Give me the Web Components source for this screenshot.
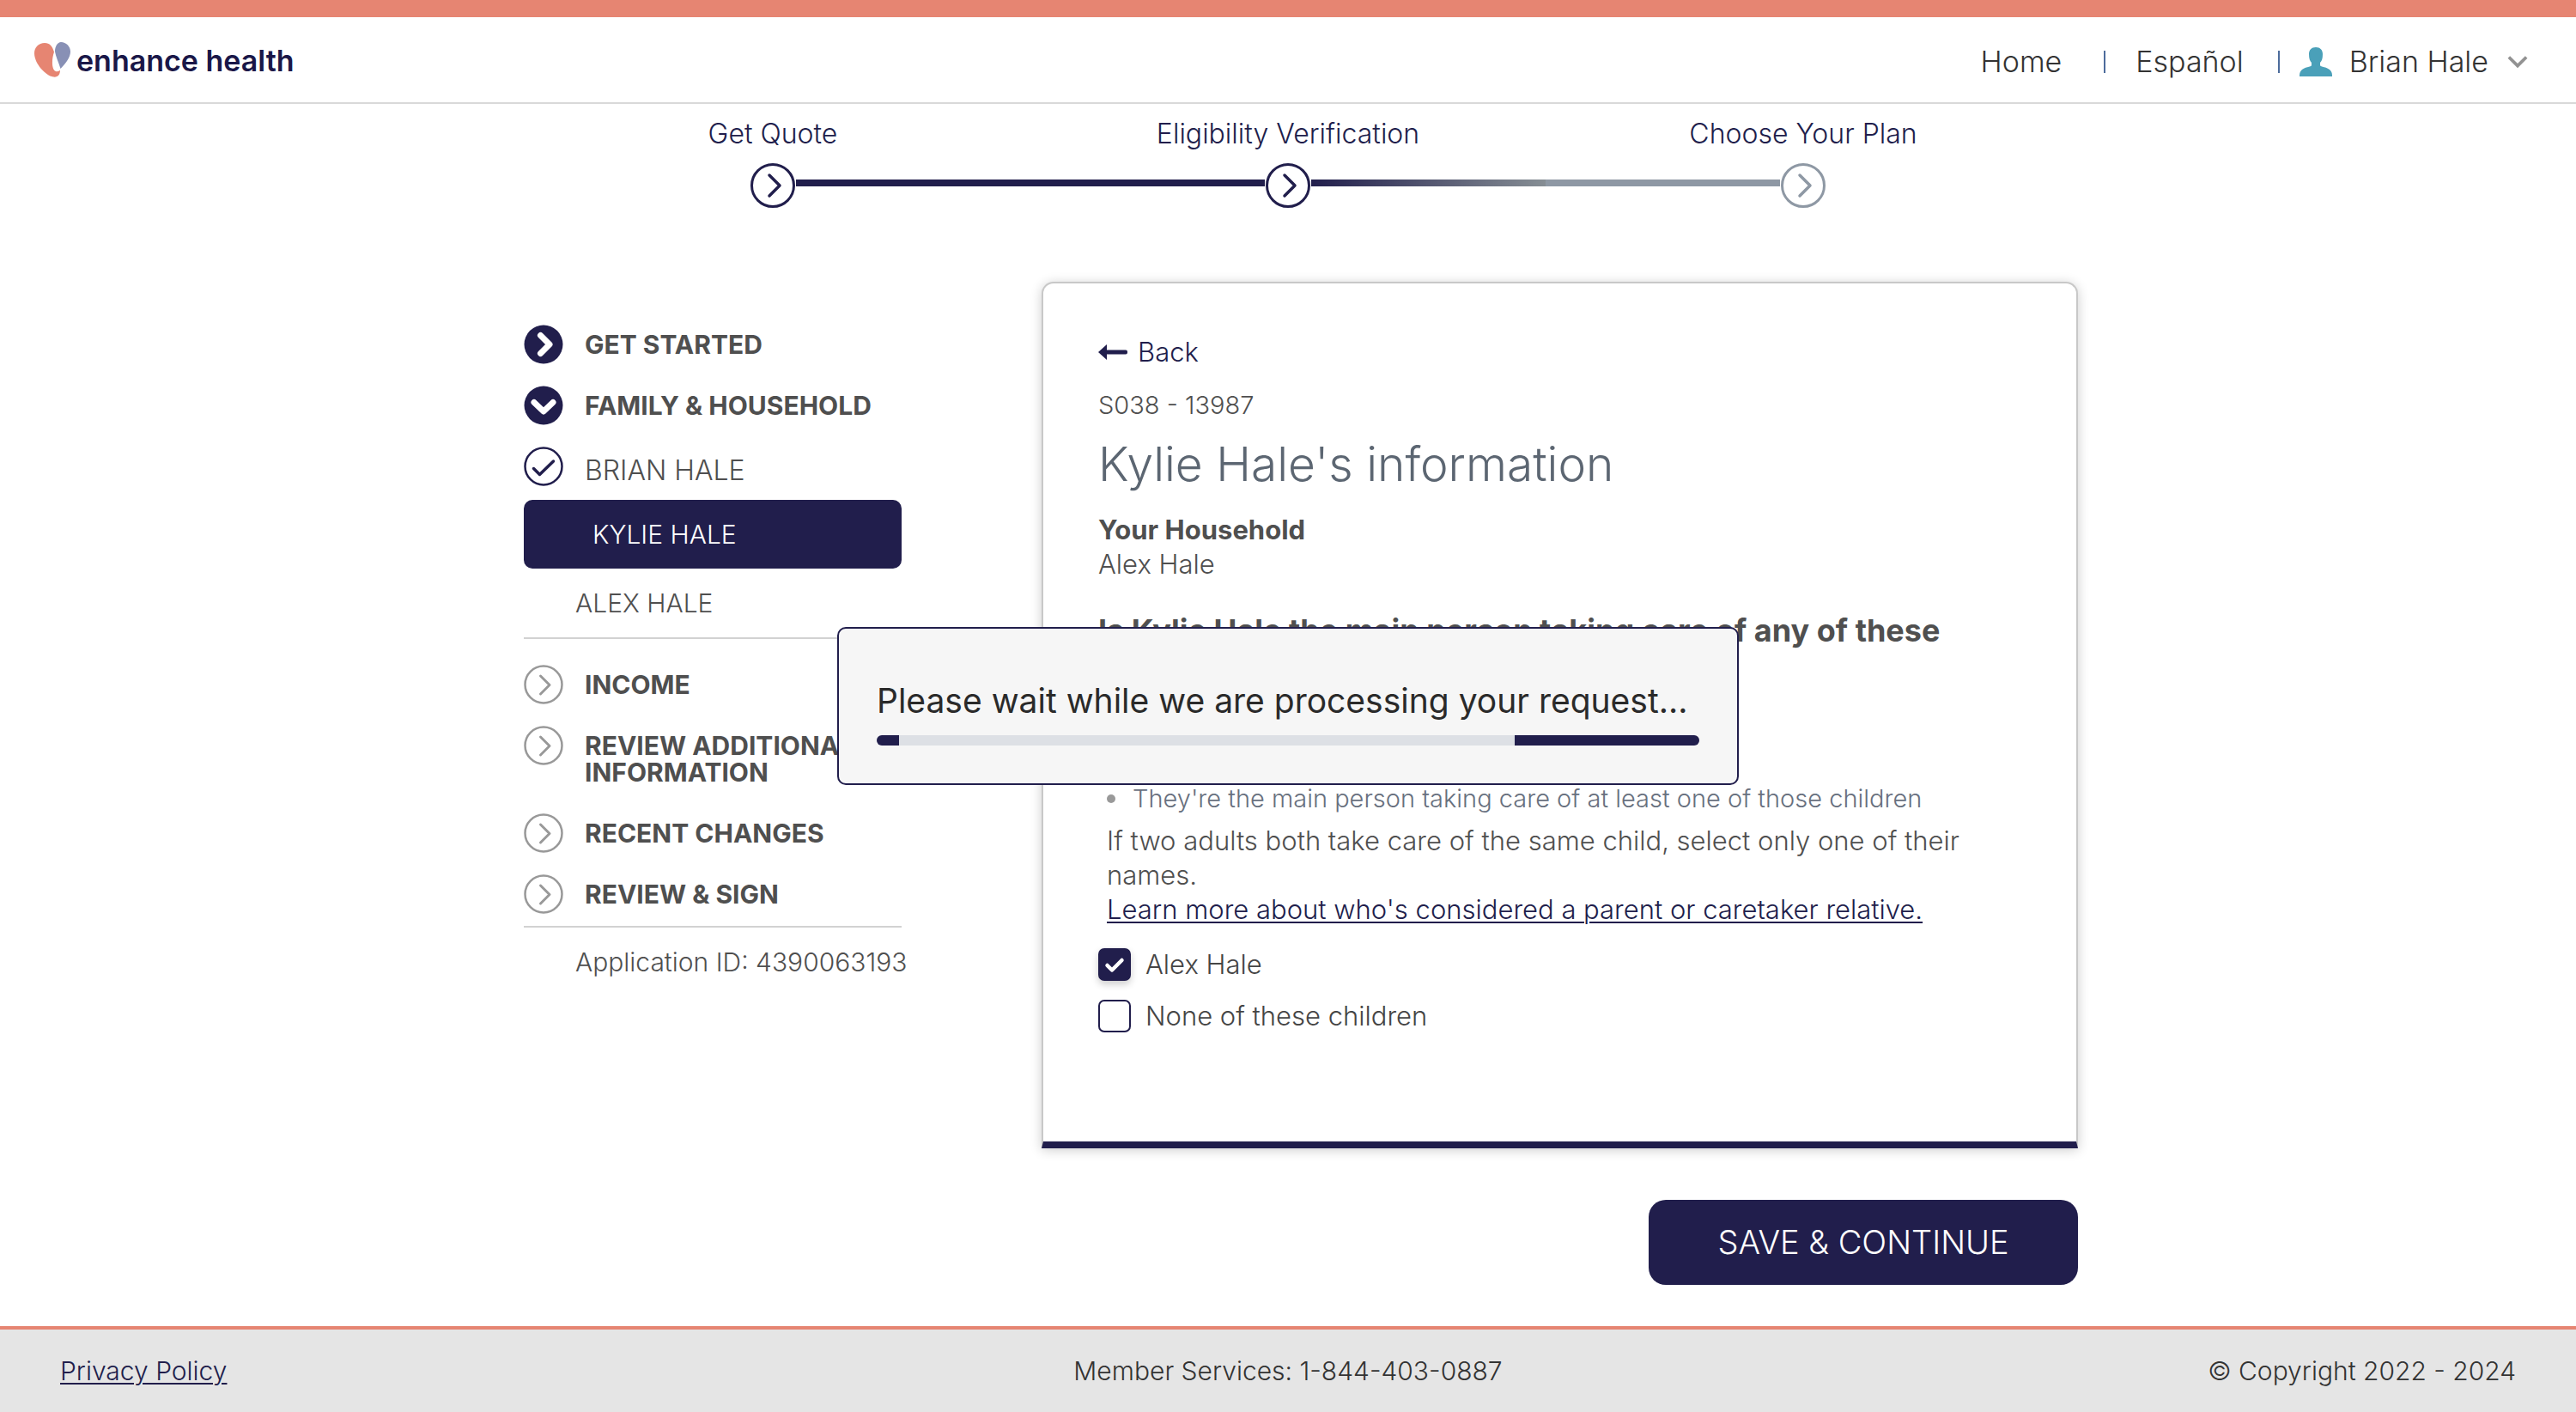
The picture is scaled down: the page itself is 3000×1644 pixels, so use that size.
<!DOCTYPE html>
<html lang="en">
<head>
<meta charset="utf-8">
<title>Enhance Health - Eligibility Verification</title>
<style>
:root{--navy:#211e4c;--coral:#e68572;--ink:#4f4f4f;--rule:#d2d2d2}
html,body{margin:0}
body{font:300 30px/40px Inter,"Open Sans",sans-serif;color:var(--ink);background:#fff}
</style>
</head>
<body>
<eh-app></eh-app>
<script>
const define = (name, html) => {
  const template = document.createElement('template');
  template.innerHTML = '<style>*{box-sizing:border-box}:host([hidden]){display:none}</style>' + html;
  customElements.define(name, class extends HTMLElement {
    connectedCallback() {
      if (this.shadowRoot) return;
      this.attachShadow({mode: 'open'}).append(template.content.cloneNode(true));
    }
  });
};

/* Brand mark and wordmark */
define('eh-logo', `
<style>
:host{display:block}
a{display:flex;align-items:center;gap:6px;color:#1a1748;text-decoration:none;font-size:34px;font-weight:600}
svg{width:43px;height:41px}
span{padding-top:2px}
</style>
<a href="#"><svg viewBox="0 0 43 41" aria-hidden="true">
<path fill="#e68572" d="M12 1C5 1 0 6 0 13c0 12 13 26 22 27.500 5 .8 8-2 8-8-1 1.500-3 2-5 1.500-5-1.500-5-14-2-22.500C21 5 18 1 12 1Z"/>
<path fill="#8890b5" d="M31 0c-4 0-7 5-7 11 1 6 4 12 6.500 20C37 24 42 18 42 11 42 5 37 0 31 0Z"/>
</svg><span>enhance health</span></a>`);

/* Top bar */
define('eh-header', `
<style>
:host{display:block}
header{display:flex;align-items:center;justify-content:space-between;height:121px;padding:0 56px 0 40px;border-top:20px solid var(--coral);border-bottom:2px solid #d9d9d9}
nav{display:flex;align-items:center;padding-top:4px;color:#333;font-size:34px}
a{color:inherit;text-decoration:none}
i{width:2px;height:26px;background:#4d6c9c}
.home{margin-right:49px}.lang{margin:0 40px 0 35px}
button{display:flex;align-items:center;font:inherit;color:inherit;background:none;border:0;padding:0;margin-left:23px}
.person{width:38px;height:34px;margin-right:20px}
.chev{width:24px;height:16px;margin-left:22px}
</style>
<header><eh-logo></eh-logo>
<nav><a class="home" href="#">Home</a><i></i><a class="lang" href="#">Español</a><i></i>
<button type="button"><svg class="person" viewBox="0 0 38 34" aria-hidden="true"><path fill="#4aa0b9" d="M19 0c5 0 8 3 8 8 0 5-1 8-3 10v3c0 2 9 2 12 6 2 2 2 5 2 7H0c0-2 0-5 2-7 3-4 12-4 12-6v-3c-2-2-3-5-3-10 0-5 3-8 8-8Z"/></svg><span>Brian Hale</span>
<svg class="chev" viewBox="0 0 26 16" fill="none" stroke="#929292" stroke-width="4" aria-hidden="true"><path d="M2 2l11 11L24 2"/></svg></button></nav></header>`);

/* One stage of the progress track; the "before" and "after" attributes colour its half-lines */
define('eh-step', `
<style>
:host{display:flex;flex-direction:column;align-items:center;gap:14px;flex:1;color:var(--navy);font-size:32px;--mark:var(--navy)}
:host([upcoming]){--mark:#8e98a4}
.track{display:flex;align-items:center;align-self:stretch;gap:1px}
.track i{flex:1;height:8px;margin-bottom:6px}
svg{width:52px;height:52px;fill:none;stroke:var(--mark)}
:host([before=done]) .l,:host([after=done]) .r{background:var(--navy)}
:host([before=todo]) .l{background:#8e98a4}
:host([after=current]) .r{background:linear-gradient(90deg,var(--navy),#868e94)}
</style>
<span><slot></slot></span>
<div class="track"><i class="l"></i><svg viewBox="0 0 52 52" aria-hidden="true"><circle cx="26" cy="26" r="24.500" stroke-width="3"/><path d="M22 14l12 12-12 12" stroke-width="3.500" stroke-linecap="round" stroke-linejoin="round"/></svg><i class="r"></i></div>`);

define('eh-stepper', `
<style>:host{display:flex;padding:15px 20% 0}</style>
<eh-step after="done">Get Quote</eh-step>
<eh-step before="done" after="current">Eligibility Verification</eh-step>
<eh-step before="todo" upcoming>Choose Your Plan</eh-step>`);

/* Section heading in the side menu; "state" picks the round marker */
define('eh-section', `
<style>
:host{display:block}
a{display:flex;gap:25px;color:var(--ink);text-decoration:none;font-size:30px;line-height:31px;font-weight:700}
span{padding:8px 0 32px}
:host(:last-of-type) span{padding-bottom:21px}
svg{display:none;width:46px;height:46px;flex:none;fill:none;stroke-linecap:round;stroke-linejoin:round}
:host([state=done]) .done,:host([state=open]) .open,:host([state=todo]) .todo,:host([state=checked]) .checked{display:block}
:host([state=checked]) a{font-size:32px;font-weight:300;line-height:40px}
:host([state=checked]) span{padding-bottom:14px}
</style>
<a href="#">
<svg class="done" viewBox="0 0 46 46"><circle cx="23" cy="23" r="22.500" fill="#211e4c"/><path d="M19.500 12.500L30 23 19.500 33.500" stroke="#fff" stroke-width="7"/></svg>
<svg class="open" viewBox="0 0 46 46"><circle cx="23" cy="23" r="22.500" fill="#211e4c"/><path d="M12 19.500L23 30l11-10.500" stroke="#fff" stroke-width="7"/></svg>
<svg class="checked" viewBox="0 0 46 46" stroke="#211e4c"><circle cx="23" cy="23" r="21.500" stroke-width="2.500"/><path d="M11.500 25.500l7 7L34.500 17" stroke-width="3.500"/></svg>
<svg class="todo" viewBox="0 0 46 46" stroke="#999"><circle cx="23" cy="23" r="21.500" stroke-width="2.500"/><path d="M19.500 13L30 23.500 19.500 34" stroke-width="3"/></svg>
<span><slot></slot></span></a>`);

define('eh-sidebar', `
<style>
:host{display:block;padding-top:50px}
hr{margin:0;border:0;height:2px;background:var(--rule)}
.sub{display:block;padding:20px 0 20px 60px;color:inherit;text-decoration:none;white-space:nowrap}
.current{padding-left:80px;border-radius:10px;background:var(--navy);color:#fff}
.rest{padding-top:30px}
</style>
<nav>
<div><eh-section state="done">GET STARTED</eh-section><eh-section state="open">FAMILY &amp; HOUSEHOLD</eh-section><eh-section state="checked">BRIAN HALE</eh-section></div>
<a class="sub current" href="#">KYLIE HALE</a>
<a class="sub" href="#">ALEX HALE</a>
<hr>
<div class="rest"><eh-section state="todo">INCOME</eh-section><eh-section state="todo">REVIEW ADDITIONAL<br>INFORMATION</eh-section><eh-section state="todo">RECENT CHANGES</eh-section><eh-section state="todo">REVIEW &amp; SIGN</eh-section></div>
<hr>
<div class="sub">Application ID: 4390063193</div>
</nav>`);

customElements.define('eh-checkbox', class extends HTMLElement {
  connectedCallback() {
    this.attachShadow({mode: 'open'}).innerHTML = `
<style>
:host{display:block}
label{display:grid;grid-template-columns:38px 1fr;column-gap:17px;align-items:center;color:#454545}
input,svg{grid-area:1/1;margin:0;width:38px;height:38px}
input{appearance:none;box-sizing:border-box;border:2px solid var(--navy);border-radius:7px;background:#fff}
input:checked{background:var(--navy);box-shadow:0 4px 8px #0003}
svg{visibility:hidden;pointer-events:none;z-index:1}
input:checked+svg{visibility:visible}
</style>
<label><input type="checkbox"${this.hasAttribute('checked') ? ' checked' : ''}><svg viewBox="0 0 38 38" fill="none" stroke="#fff" stroke-width="4.500" stroke-linecap="round" stroke-linejoin="round" aria-hidden="true"><path d="M10.500 20l5.500 5.500L27.500 14"/></svg><span><slot></slot></span></label>`;
  }
});

define('eh-question-card', `
<style>
:host{display:block;padding:60px 65px 126px 64px;border:2px solid #c8c8c8;border-bottom:8px solid var(--navy);border-radius:14px 14px 0 0;box-shadow:0 2px 14px #0003;background:#fff;font-size:31px}
.back{display:flex;align-items:center;gap:12px;color:var(--navy);text-decoration:none}
.back svg{width:34px;height:18px}
p,h1,h2,h3,ul{margin:0}
.code{margin-top:22px;font-size:29px}
h1{margin-top:18px;font-size:55px;line-height:60px;font-weight:300;color:#5c6672}
h2{margin-top:27px;font-size:31px;line-height:40px;font-weight:700}
h3{margin-top:37px;min-height:80px;font-size:36px;line-height:40px;font-weight:700}
.hint{padding-left:10px}
ul{margin-top:116px;padding:0;list-style:none;font-size:29px;color:#68707e}
li{display:flex;align-items:center;gap:20px}
li::before{content:"";width:10px;height:10px;border-radius:50%;background:#999}
.hint p{margin-top:9px}
.hint a{display:block;color:var(--navy);text-underline-offset:3px;text-decoration-thickness:2px}
.options{display:grid;gap:20px;margin-top:24px}
</style>
<a class="back" href="#"><svg viewBox="0 0 34 18" fill="#211e4c" aria-hidden="true"><path d="M0 9l10-9v6.500h22a2 2 0 0 1 2 2v1a2 2 0 0 1-2 2H10V18Z"/></svg>Back</a>
<p class="code">S038 - 13987</p>
<h1>Kylie Hale's information</h1>
<h2>Your Household</h2>
<p>Alex Hale</p>
<h3>Is Kylie Hale the main person taking care of any of these</h3>
<div class="hint"><ul><li>They're the main person taking care of at least one of those children</li></ul>
<p>If two adults both take care of the same child, select only one of their names.</p>
<a href="#">Learn more about who's considered a parent or caretaker relative.</a></div>
<div class="options"><eh-checkbox checked>Alex Hale</eh-checkbox><eh-checkbox>None of these children</eh-checkbox></div>`);

define('eh-button', `
<style>
:host{display:block}
button{min-width:500px;padding:29px 40px 30px;border:0;border-radius:20px;background:var(--navy);color:#fff;font:300 38px/40px Inter,sans-serif}
</style>
<button type="submit"><slot></slot></button>`);

define('eh-footer', `
<style>
footer{display:grid;grid-template-columns:1fr auto 1fr;align-items:center;height:100px;padding:0 70px;border-top:4px solid var(--coral);background:#e5e5e5;color:#333}
a{justify-self:start;color:var(--navy);text-underline-offset:3px;text-decoration-thickness:2px}
:host{display:block}
.copy{justify-self:end}
</style>
<footer><a href="#">Privacy Policy</a><span>Member Services: 1-844-403-0887</span><span class="copy">© Copyright 2022 - 2024</span></footer>`);

/* Blocking notice, centred in the window */
define('eh-wait-dialog', `
<style>
:host{position:fixed;inset:0;display:grid;place-content:center}
div[role=dialog]{width:1050px;padding:64px 44px 44px;border:2px solid var(--navy);border-radius:10px;background:#f6f6f6;color:#2a2a2a;font-size:39px;font-weight:400}
p{margin:0;white-space:nowrap}
.bar{display:flex;height:12px;margin-top:20px;border-radius:6px;overflow:hidden;background:#dde0e5;justify-content:space-between}
.bar i{background:var(--navy)}
.head{width:2.7%}.tail{width:22.4%}
</style>
<div role="dialog" aria-labelledby="msg"><p id="msg">Please wait while we are processing your request...</p>
<div class="bar" role="progressbar" aria-labelledby="msg"><i class="head"></i><i class="tail"></i></div></div>`);

define('eh-app', `
<style>
:host{display:flex;flex-direction:column;min-height:100vh}
main{flex:1}
.body{display:grid;grid-template-columns:440px 1fr;column-gap:163px;margin-top:86px;padding:0 calc(20% - 20px) 40px calc(20% + 10px)}
eh-button{grid-column:2;justify-self:end;margin-top:60px}
</style>
<eh-header></eh-header>
<main><eh-stepper></eh-stepper>
<div class="body"><eh-sidebar></eh-sidebar><eh-question-card></eh-question-card><eh-button>SAVE &amp; CONTINUE</eh-button></div></main>
<eh-footer></eh-footer>
<eh-wait-dialog></eh-wait-dialog>`);
</script>
</body>
</html>
